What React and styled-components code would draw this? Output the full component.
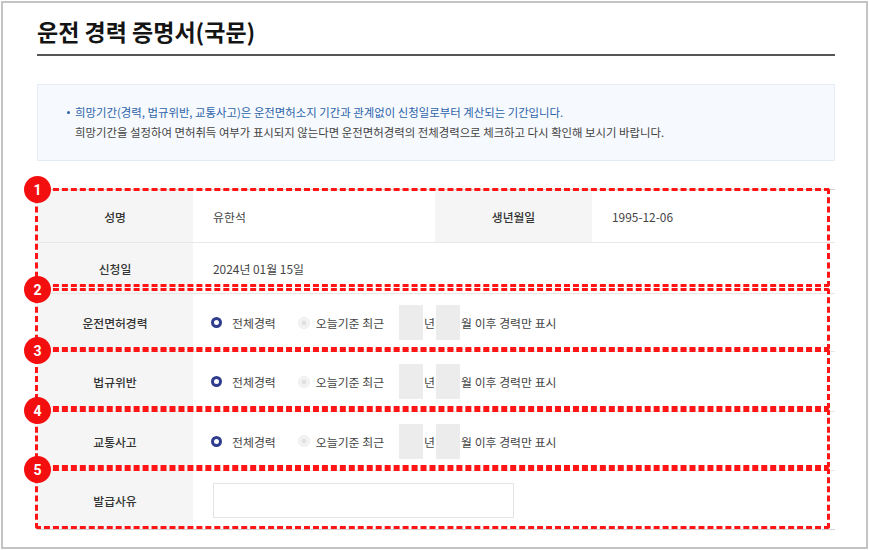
import React from "react"
import styled, { createGlobalStyle } from "styled-components"

const GlobalStyle = createGlobalStyle`
  body {
    margin: 0;
    background: #fff;
    font-family: "Noto Sans CJK KR", "Noto Sans", sans-serif;
  }
`

const Frame = styled.div`
  margin: 1px;
  width: 867px;
  height: 548px;
  box-sizing: border-box;
  border: 2px solid #c4c4c4;
  padding: 11px 31px 0 34px;
  background: #fff;
`

const Title = styled.h2`
  margin: 0;
  padding-bottom: 6px;
  font-size: 23px;
  line-height: 34px;
  font-weight: 700;
  color: #141414;
  border-bottom: 2px solid #555;
`

const Notice = styled.div`
  margin-top: 28px;
  border: 1px solid #e6ecf3;
  background: #f6f9fd;
  padding: 17px 0 18px 37px;
`

const NoticeLine = styled.p`
  position: relative;
  margin: 0;
  font-size: 11.4px;
  line-height: 20px;
  color: ${({ $accent }) => ($accent ? "#2c64aa" : "#444")};

  ${({ $bullet }) =>
    $bullet &&
    `
    &::before {
      content: "";
      position: absolute;
      left: -8px;
      top: 9px;
      width: 3px;
      height: 3px;
      border-radius: 50%;
      background: #2c64aa;
    }
  `}
`

const TableWrap = styled.div`
  position: relative;
  margin-top: 28px;
  border-top: 1px solid #d2d2d2;
  border-bottom: 1px solid #d2d2d2;
`

const Row = styled.div`
  display: grid;
  grid-template-columns: ${({ $cols }) => $cols || "156px 1fr"};
  height: ${({ $h }) => $h}px;
  box-sizing: border-box;
  border-top: ${({ $first }) => ($first ? "none" : "1px solid #e8e8e8")};
`

const Label = styled.div`
  display: flex;
  align-items: center;
  justify-content: center;
  background: #f5f5f5;
  font-size: 11.8px;
  font-weight: 500;
  color: #333;
`

const Value = styled.div`
  display: flex;
  align-items: center;
  padding-left: 20px;
  font-size: 11.9px;
  color: #444;
`

const Option = styled.span`
  display: flex;
  align-items: center;
  gap: ${({ $checked }) => ($checked ? "10px" : "6px")};
  margin-left: ${({ $checked }) => ($checked ? "-2px" : "22px")};
  color: #444;
`

const Radio = styled.span`
  display: inline-block;
  box-sizing: border-box;
  border-radius: 50%;
  width: ${({ $checked }) => ($checked ? "11px" : "12px")};
  height: ${({ $checked }) => ($checked ? "11px" : "12px")};
  border: ${({ $checked }) => ($checked ? "3px solid #2f3d8f" : "1px solid #ededed")};
  background: ${({ $checked }) =>
    $checked ? "#fff" : "radial-gradient(circle, #e2e2e2 0 2px, #f4f4f4 3px)"};
`

const NumBox = styled.span`
  display: inline-block;
  width: 24px;
  height: 35px;
  background: #ececec;
  margin-left: ${({ $first }) => ($first ? "15px" : "0")};
`

const Unit = styled.span`
  margin: 0 1px;
`

const ReasonInput = styled.div`
  width: 301px;
  height: 35px;
  box-sizing: border-box;
  border: 1px solid #e4e4e4;
  background: #fff;
  margin-top: 1px;
`

const Annot = styled.div`
  position: absolute;
  left: -2px;
  right: 5px;
  top: ${({ $top }) => $top}px;
  height: ${({ $h }) => $h}px;
  box-sizing: border-box;
  border: 3px dashed #ff1515;
  border-radius: 3px;
  pointer-events: none;
`

const Badge = styled.span`
  position: absolute;
  left: -14px;
  top: -15px;
  width: 27px;
  height: 27px;
  border-radius: 50%;
  background: #f30f0f;
  color: #fff;
  display: flex;
  align-items: center;
  justify-content: center;
  font-family: "Roboto", "Liberation Sans", sans-serif;
  font-size: 14px;
  font-weight: 700;
`

const PeriodChoice = () => (
  <Value>
    <Option $checked>
      <Radio $checked />
      전체경력
    </Option>
    <Option>
      <Radio />
      오늘기준 최근
    </Option>
    <NumBox $first />
    <Unit>년</Unit>
    <NumBox />
    <Unit>월 이후 경력만 표시</Unit>
  </Value>
)

const marks = [
  { n: 1, top: -2, h: 99 },
  { n: 2, top: 98, h: 62 },
  { n: 3, top: 159, h: 60 },
  { n: 4, top: 219, h: 59 },
  { n: 5, top: 278, h: 61 },
]

const App = () => {
  return (
    <>
      <GlobalStyle />
      <Frame>
        <Title>운전 경력 증명서(국문)</Title>
        <Notice>
          <NoticeLine $accent $bullet>
            희망기간(경력, 법규위반, 교통사고)은 운전면허소지 기간과 관계없이 신청일로부터 계산되는 기간입니다.
          </NoticeLine>
          <NoticeLine>
            희망기간을 설정하여 면허취득 여부가 표시되지 않는다면 운전면허경력의 전체경력으로 체크하고 다시 확인해 보시기 바랍니다.
          </NoticeLine>
        </Notice>

        <TableWrap>
          <Row $first $h={52} $cols="156px 242px 157px 1fr">
            <Label>성명</Label>
            <Value>유한석</Value>
            <Label>생년월일</Label>
            <Value>1995-12-06</Value>
          </Row>
          <Row $h={51}>
            <Label>신청일</Label>
            <Value>2024년 01월 15일</Value>
          </Row>
          <Row $h={58}>
            <Label>운전면허경력</Label>
            <PeriodChoice />
          </Row>
          <Row $h={60}>
            <Label>법규위반</Label>
            <PeriodChoice />
          </Row>
          <Row $h={59}>
            <Label>교통사고</Label>
            <PeriodChoice />
          </Row>
          <Row $h={59}>
            <Label>발급사유</Label>
            <Value>
              <ReasonInput />
            </Value>
          </Row>

          {marks.map((m) => (
            <Annot key={m.n} $top={m.top} $h={m.h}>
              <Badge>{m.n}</Badge>
            </Annot>
          ))}
        </TableWrap>
      </Frame>
    </>
  )
}

export default App
